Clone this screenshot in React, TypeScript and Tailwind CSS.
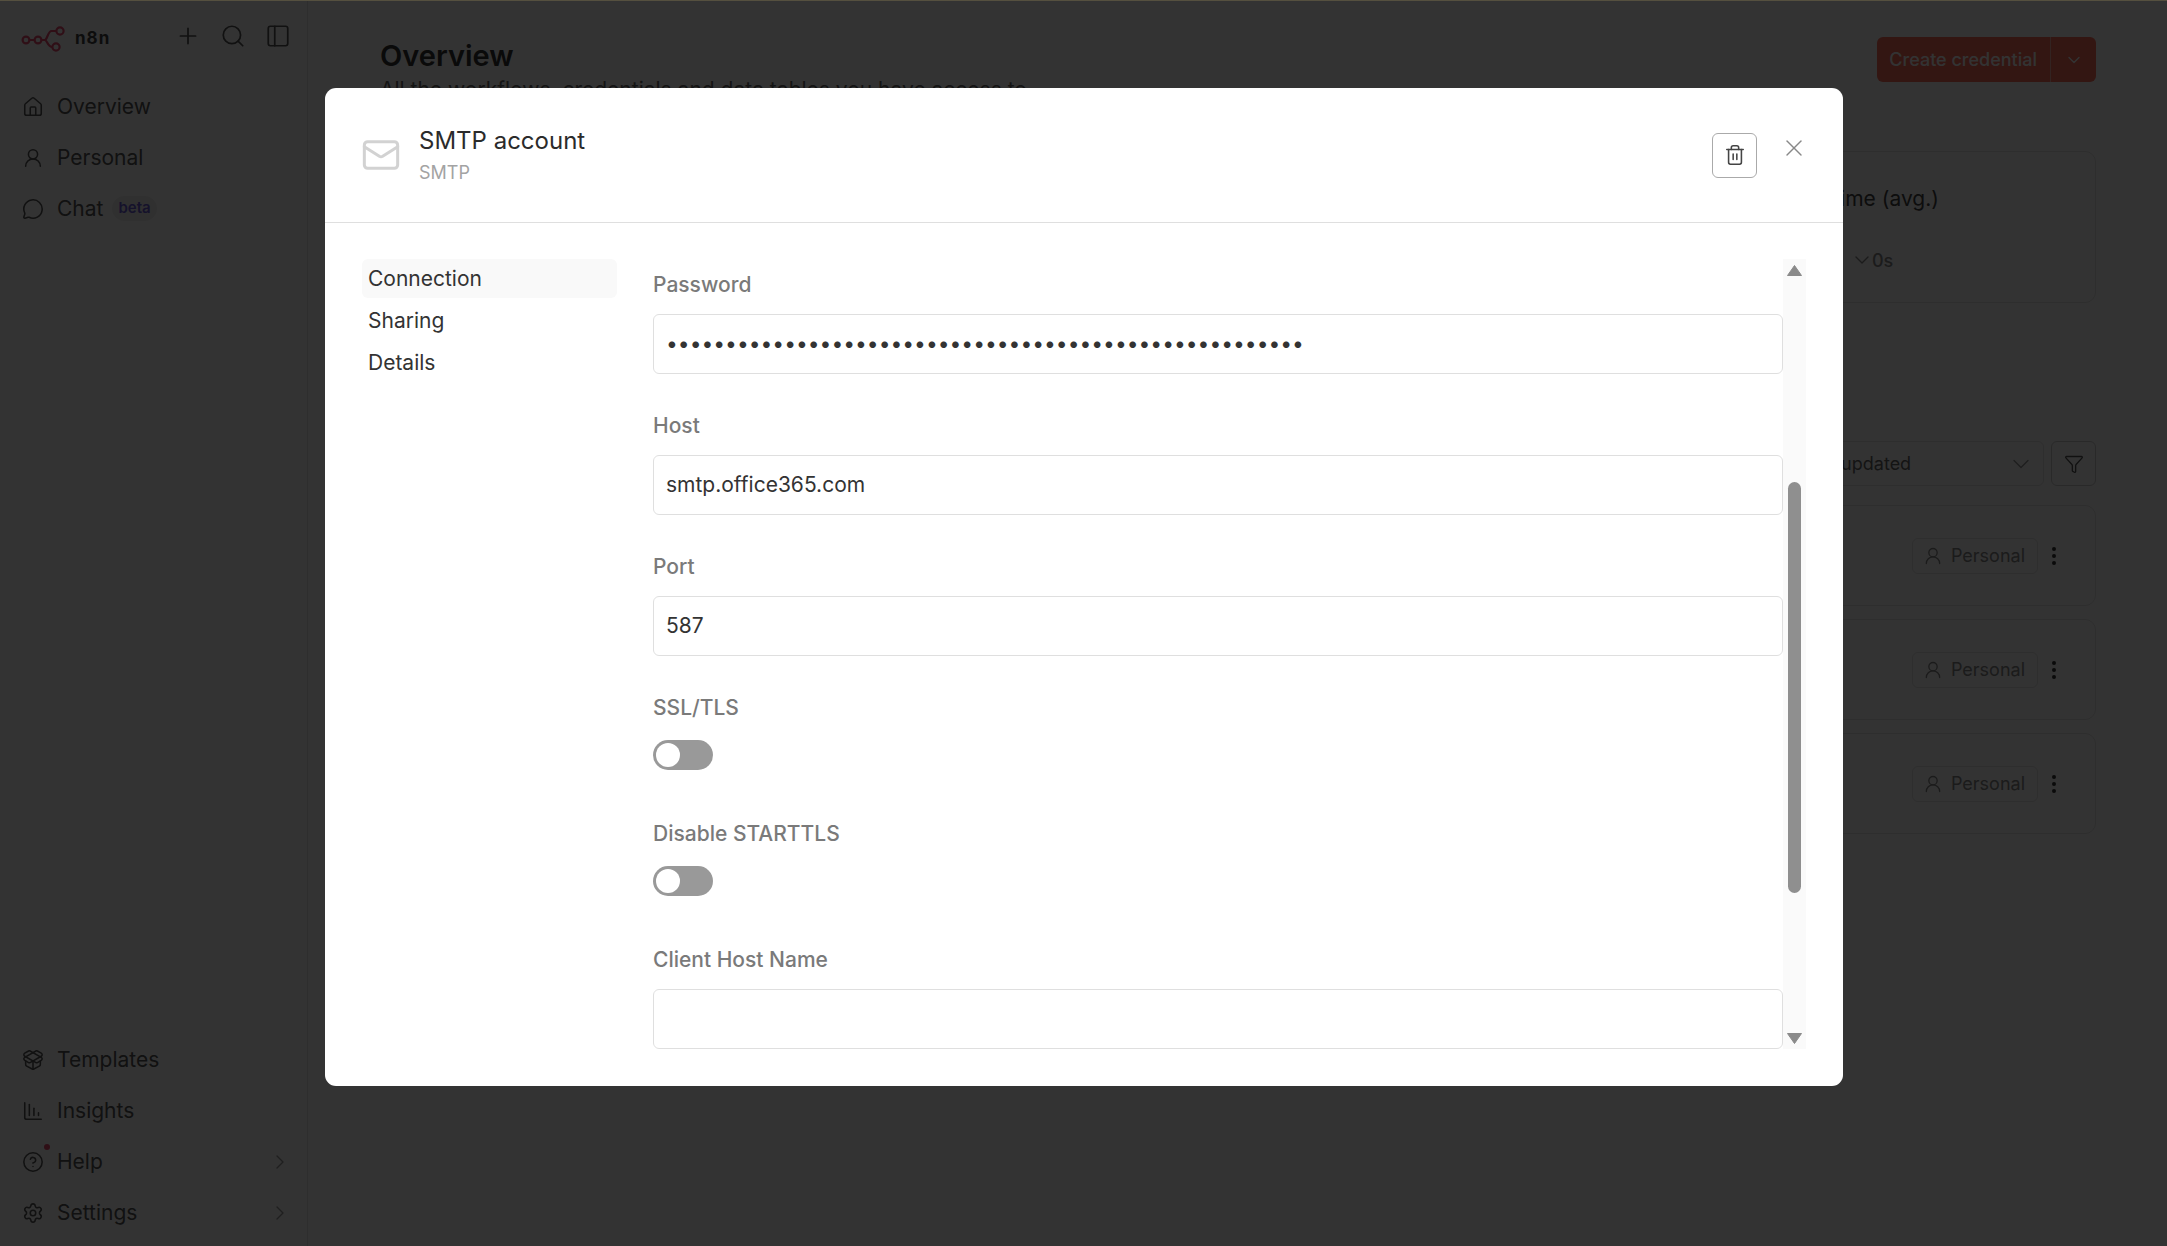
import {
  ChartColumnDecreasing,
  ChevronDown,
  ChevronRight,
  CircleHelp,
  EllipsisVertical,
  Funnel,
  House,
  Mail,
  MessageCircle,
  PackageOpen,
  PanelLeft,
  Plus,
  Search,
  Settings,
  Trash2,
  UserRound,
  X,
} from "lucide-react";
import type { ReactNode } from "react";

function Logo() {
  return (
    <svg width="46" height="26" viewBox="0 0 46 26" fill="none" stroke="#ea4b71" strokeWidth="2.2">
      <circle cx="5" cy="14" r="3.4" />
      <circle cx="17" cy="14" r="3.4" />
      <circle cx="39" cy="5" r="3.6" />
      <circle cx="35" cy="21" r="3.6" />
      <path d="M8.4 14h5.2M20.4 14h3.2c3 0 3-9 7-9h5M23.6 14c3 0 2.6 7 7.8 7" />
    </svg>
  );
}

function NavItem({ icon, label, extra }: { icon: ReactNode; label: string; extra?: ReactNode }) {
  return (
    <div className="flex h-[51px] items-center pl-[22px] pr-[15px] text-[21px] text-[#555]">
      <div className="w-[35px] shrink-0">{icon}</div>
      <span>{label}</span>
      {extra}
    </div>
  );
}

function Sidebar() {
  const icon = { size: 22, strokeWidth: 1.7 };
  return (
    <aside className="flex h-full w-[308px] shrink-0 flex-col border-r border-[#e6e6e6] bg-white">
      <div className="flex h-[78px] items-center pl-[21px]">
        <Logo />
        <span className="ml-[8px] text-[17px] font-bold tracking-[0.06em] text-[#444]">n8n</span>
        <Plus size={26} strokeWidth={1.6} className="mb-[6px] ml-[65px] text-[#555]" />
        <Search size={26} strokeWidth={1.6} className="mb-[6px] ml-[19px] text-[#555]" />
        <PanelLeft size={26} strokeWidth={1.6} className="mb-[6px] ml-[19px] text-[#555]" />
      </div>
      <div className="mt-[3px] flex flex-col">
        <NavItem icon={<House {...icon} />} label="Overview" />
        <NavItem icon={<UserRound {...icon} />} label="Personal" />
        <NavItem
          icon={<MessageCircle {...icon} />}
          label="Chat"
          extra={
            <span className="ml-[9px] rounded-full bg-[#f0f0f0] px-[6px] py-[1px] text-[15px] font-semibold text-[#6b5cd6]">
              beta
            </span>
          }
        />
      </div>
      <div className="mt-auto flex flex-col pb-[8px]">
        <NavItem icon={<PackageOpen {...icon} />} label="Templates" />
        <NavItem icon={<ChartColumnDecreasing {...icon} />} label="Insights" />
        <NavItem
          icon={
            <div className="relative w-[22px]">
              <CircleHelp {...icon} />
              <div className="absolute right-[-6px] top-[-7px] h-[6px] w-[6px] rounded-full bg-[#ea4b71]" />
            </div>
          }
          label="Help"
          extra={<ChevronRight size={24} strokeWidth={1.4} className="ml-auto text-[#999]" />}
        />
        <NavItem
          icon={<Settings {...icon} />}
          label="Settings"
          extra={<ChevronRight size={24} strokeWidth={1.4} className="ml-auto text-[#999]" />}
        />
      </div>
    </aside>
  );
}

function ListRow() {
  return (
    <div className="flex h-[101px] items-center justify-end rounded-[11px] border border-[#e5e5e5] pr-[29px]">
      <div className="flex h-[36px] items-center gap-[8px] rounded-[6px] border border-[#e5e5e5] pl-[10px] pr-[12px] text-[18px] text-[#888]">
        <UserRound size={20} strokeWidth={1.6} />
        <span>Personal</span>
      </div>
      <EllipsisVertical size={24} strokeWidth={2} className="ml-[4px] text-[#333]" />
    </div>
  );
}

function Main() {
  return (
    <main className="min-w-0 flex-1 pl-[72px] pr-[71px]">
      <div className="flex items-start justify-between pt-[37px]">
        <div className="mt-[3px]">
          <h1 className="text-[29px] font-semibold leading-[32px] text-[#333]">Overview</h1>
          <p className="mt-[4px] text-[21px] leading-[28px] text-[#666]">
            All the workflows, credentials and data tables you have access to
          </p>
        </div>
        <div className="flex h-[45px] items-center rounded-[6px] bg-[#ff6d5a] text-[18px] font-medium text-white">
          <span className="pl-[12px] pr-[13px]">Create credential</span>
          <div className="flex h-full w-[46px] items-center justify-center border-l border-[#ffb0a5]">
            <ChevronDown size={20} strokeWidth={1.6} />
          </div>
        </div>
      </div>
      <div className="mt-[47px] flex h-[152px] rounded-[11px] border border-[#e5e5e5]">
        <div className="ml-auto w-[306px] pt-[31px]">
          <div className="text-[21px] text-[#444]">Run time (avg.)</div>
          <div className="mt-[32px] flex items-center pl-[61px] text-[18px] font-medium text-[#888]">
            <ChevronDown size={24} strokeWidth={1.4} />
            <span className="ml-[-2px]">0s</span>
          </div>
        </div>
      </div>
      <div className="mt-[138px] flex justify-end gap-[7px]">
        <div className="flex h-[45px] w-[305px] items-center justify-between rounded-[6px] border border-[#e5e5e5] pr-[8px] text-[18px] text-[#666]">
          <span>Sort by last updated</span>
          <ChevronDown size={28} strokeWidth={1.2} className="text-[#999]" />
        </div>
        <div className="flex h-[45px] w-[45px] items-center justify-center rounded-[6px] border border-[#ccc] text-[#555]">
          <Funnel size={20} strokeWidth={1.6} />
        </div>
      </div>
      <div className="mt-[19px] flex flex-col gap-[13px]">
        <ListRow />
        <ListRow />
        <ListRow />
      </div>
    </main>
  );
}

function Field({ label, children }: { label: string; children: ReactNode }) {
  return (
    <div className="flex flex-col">
      <label className="text-[21px] font-medium leading-[26px] text-[#7a7a7a]">{label}</label>
      {children}
    </div>
  );
}

function TextInput({ value, type = "text" }: { value: string; type?: string }) {
  return (
    <input
      readOnly
      type={type}
      value={value}
      className="mt-[16px] h-[60px] w-full rounded-[6px] border border-[#dfdfdf] px-[12px] pb-[1px] text-[21px] text-[#333] outline-none"
    />
  );
}

function Toggle() {
  return (
    <div className="mb-[12px] mt-[19px] flex h-[30px] w-[60px] items-center rounded-full bg-[#999] pl-[3px]">
      <div className="h-[24px] w-[24px] rounded-full bg-white" />
    </div>
  );
}

function Scrollbar() {
  return (
    <div className="flex h-full w-[23px] shrink-0 flex-col items-center bg-[#fafafa]">
      <svg className="mt-[6px] shrink-0" width="15" height="11" viewBox="0 0 15 11" fill="#8a8a8a">
        <path d="M7.5 0.5 14.5 10.5H0.5Z" strokeLinejoin="round" stroke="#8a8a8a" />
      </svg>
      <div className="mt-[206px] h-[411px] w-[13px] shrink-0 rounded-full bg-[#8f8f8f]" />
      <svg className="mt-auto mb-[5px] shrink-0" width="15" height="11" viewBox="0 0 15 11" fill="#8a8a8a">
        <path d="M7.5 10.5 14.5 0.5H0.5Z" strokeLinejoin="round" stroke="#8a8a8a" />
      </svg>
    </div>
  );
}

function CredentialModal() {
  return (
    <div className="absolute left-[325px] top-[88px] h-[998px] w-[1518px] rounded-[11px] bg-white">
      <div className="flex h-[135px] items-center border-b border-[#dfdfdf] pl-[36px] pr-[35px]">
        <Mail size={40} strokeWidth={1.8} className="text-[#d2d2d2]" />
        <div className="ml-[18px]">
          <div className="text-[24px] leading-[28px] text-[#2b2b2b]">SMTP account</div>
          <div className="mt-[7px] text-[18px] leading-[22px] text-[#a3a3a3]">SMTP</div>
        </div>
        <div className="ml-auto flex h-[45px] w-[45px] items-center justify-center rounded-[6px] border border-[#aaa] text-[#444]">
          <Trash2 size={22} strokeWidth={1.7} />
        </div>
        <X size={28} strokeWidth={1.2} className="mb-[14px] ml-[23px] text-[#888]" />
      </div>
      <div className="flex pl-[37px] pt-[36px]">
        <div className="flex w-[255px] shrink-0 flex-col gap-[3px] text-[21px] text-[#333]">
          <div className="flex h-[39px] items-center rounded-[6px] bg-[#f9f9f9] pl-[6px]">Connection</div>
          <div className="flex h-[39px] items-center pl-[6px]">Sharing</div>
          <div className="flex h-[39px] items-center pl-[6px]">Details</div>
        </div>
        <div className="ml-[36px] flex h-[790px] w-[1153px]">
          <div className="h-full w-[1130px] overflow-hidden pt-[13px]">
            <div className="flex flex-col gap-[39px]">
              <Field label="Password">
                <TextInput type="password" value={"x".repeat(54)} />
              </Field>
              <Field label="Host">
                <TextInput value="smtp.office365.com" />
              </Field>
              <Field label="Port">
                <TextInput value="587" />
              </Field>
              <Field label="SSL/TLS">
                <Toggle />
              </Field>
              <Field label="Disable STARTTLS">
                <Toggle />
              </Field>
              <Field label="Client Host Name">
                <TextInput value="" />
              </Field>
            </div>
          </div>
          <Scrollbar />
        </div>
      </div>
    </div>
  );
}

export default function App() {
  return (
    <div className="relative h-screen w-full overflow-hidden bg-white font-['Inter',sans-serif]">
      <div className="flex h-full">
        <Sidebar />
        <Main />
      </div>
      <div className="absolute inset-0 bg-black/80" />
      <div className="absolute inset-x-0 top-0 h-px bg-[#55503f]" />
      <CredentialModal />
    </div>
  );
}
